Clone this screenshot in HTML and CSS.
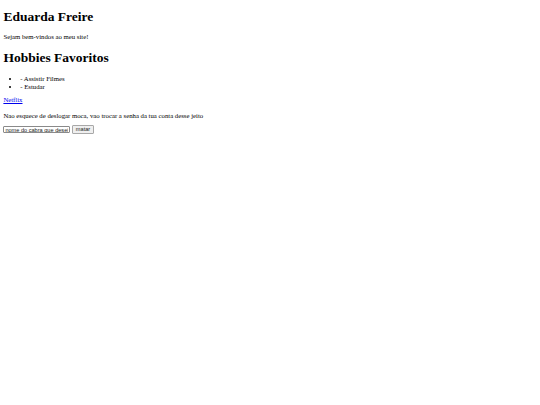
FILE: index.html
```html
<!DOCTYPE html>
<html lang="pt-BR">
<head>
<meta charset="utf-8">
<title>Eduarda Freire</title>
<link rel="stylesheet" href="styles.css">
</head>
<body>
<h1 class="title first">Eduarda Freire</h1>
<p class="text">Sejam bem-vindos ao meu site!</p>
<h1 class="title">Hobbies Favoritos</h1>
<ul class="list">
<li>- Assistir Filmes</li>
<li>- Estudar</li>
</ul>
<p class="text link-line"><a class="link" href="#">Netflix</a></p>
<p class="text note">Nao esquece de deslogar moca, vao trocar a senha da tua conta desse jeito</p>
<form class="form">
<input class="field" type="text" value="nome do cabra que deseja matar"><button class="btn" type="button">matar</button>
</form>
</body>
</html>
```
FILE: styles.css
```css
html, body {
  background: #ffffff;
}
body {
  margin: 3.375px;
  font-family: "Liberation Serif", "Times New Roman", serif;
  font-size: 6.75px;
  color: #000000;
}
.title {
  font-size: 13.5px;
  font-weight: bold;
  line-height: 15px;
  margin: 9px 0;
}
.first {
  margin-top: 6px;
}
.text {
  margin: 7px 0;
  line-height: 8px;
}
.list {
  margin: 10px 0 5px;
  padding-left: 16.875px;
  line-height: 8px;
}
.link-line {
  margin: 5px 0 8px;
}
.note {
  margin: 8px 0 5px;
}
.link {
  color: #0000ee;
  text-decoration: underline;
}
.form {
  display: flex;
  align-items: center;
  gap: 1.7px;
}
.field {
  box-sizing: border-box;
  width: 67px;
  height: 7.5px;
  margin: 0;
  padding: 0 1px;
  font-family: "Liberation Sans", Arial, sans-serif;
  font-size: 5.6px;
  line-height: 1;
  color: #222;
  border: 0.6px solid #8a8a8a;
  border-radius: 1px;
  background: #fff;
  outline: none;
}
.btn {
  box-sizing: border-box;
  height: 8.5px;
  margin: 0;
  padding: 0 2.8px;
  font-family: "Liberation Sans", Arial, sans-serif;
  font-size: 5.6px;
  line-height: 1;
  color: #222;
  background: #efefef;
  border: 0.6px solid #a8a8a8;
  border-radius: 1px;
}
```
